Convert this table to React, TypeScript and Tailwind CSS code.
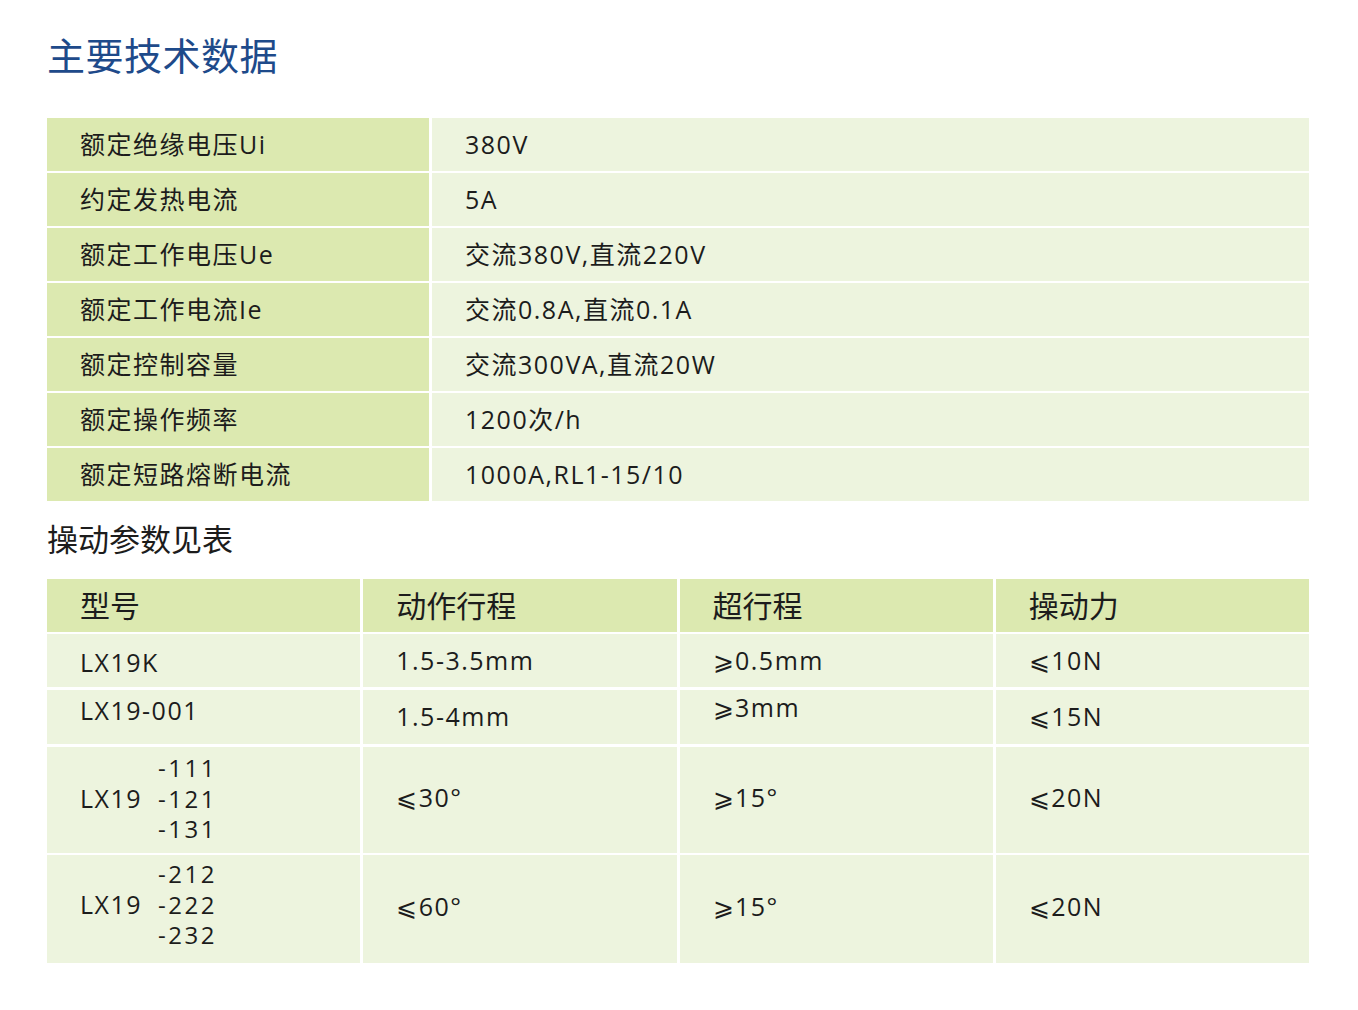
import React from "react";

const specs: [string, string][] = [
  ["额定绝缘电压Ui", "380V"],
  ["约定发热电流", "5A"],
  ["额定工作电压Ue", "交流380V,直流220V"],
  ["额定工作电流Ie", "交流0.8A,直流0.1A"],
  ["额定控制容量", "交流300VA,直流20W"],
  ["额定操作频率", "1200次/h"],
  ["额定短路熔断电流", "1000A,RL1-15/10"],
];

const font = {
  fontFamily: '"Open Sans", "Noto Sans CJK SC", sans-serif',
};

function GroupModel({ codes }: { codes: string[] }) {
  return (
    <div className="flex items-center">
      <span className="w-[78px]">LX19</span>
      <div className="flex flex-col text-[24px] leading-[30.5px] tracking-[2.5px]">
        {codes.map((c) => (
          <span key={c} className="block h-[30.5px]">
            {c}
          </span>
        ))}
      </div>
    </div>
  );
}

export default function App() {
  return (
    <div className="min-h-screen bg-white text-[#1c1c1c] px-[47px] pt-[30px]" style={font}>
      <h1 className="text-[38px] leading-[50px] text-[#1e4a8a] tracking-[0.5px]">
        主要技术数据
      </h1>

      <div className="mt-[38px] grid grid-cols-[382px_1fr] gap-x-[3px] gap-y-[2px] w-[1262px] text-[25px] tracking-[1.5px]">
        {specs.map(([k, v]) => (
          <React.Fragment key={k}>
            <div className="bg-[#dce9b0] h-[53px] flex items-center pl-[33px]">{k}</div>
            <div className="bg-[#edf4de] flex items-center pl-[33px]">{v}</div>
          </React.Fragment>
        ))}
      </div>

      <div className="mt-[14px] text-[31px] leading-[48px]">操动参数见表</div>

      <div className="mt-[16px] grid grid-cols-4 gap-x-[3px] gap-y-[2px] w-[1262px] text-[25px] tracking-[1.5px]">
        {["型号", "动作行程", "超行程", "操动力"].map((h) => (
          <div key={h} className="bg-[#dce9b0] h-[53px] flex items-center pl-[33px] text-[30px] tracking-[0px]">
            {h}
          </div>
        ))}

        <div className="bg-[#edf4de] h-[53px] flex items-center pl-[33px] pt-[4px]">LX19K</div>
        <div className="bg-[#edf4de] h-[53px] flex items-center pl-[33px]">1.5-3.5mm</div>
        <div className="bg-[#edf4de] h-[53px] flex items-center pl-[33px]">⩾0.5mm</div>
        <div className="bg-[#edf4de] h-[53px] flex items-center pl-[33px]">⩽10N</div>

        <div className="bg-[#edf4de] h-[54px] flex items-center pl-[33px] pb-[12px] mt-[1px]">LX19-001</div>
        <div className="bg-[#edf4de] h-[54px] flex items-center pl-[33px] mt-[1px]">1.5-4mm</div>
        <div className="bg-[#edf4de] h-[54px] flex items-center pl-[33px] pb-[18px] mt-[1px]">⩾3mm</div>
        <div className="bg-[#edf4de] h-[54px] flex items-center pl-[33px] mt-[1px]">⩽15N</div>

        <div className="bg-[#edf4de] h-[106px] flex items-center pl-[33px] pb-[2px] mt-[1px]">
          <GroupModel codes={["-111", "-121", "-131"]} />
        </div>
        <div className="bg-[#edf4de] h-[106px] flex items-center pl-[33px] pb-[4px] mt-[1px]">⩽30°</div>
        <div className="bg-[#edf4de] h-[106px] flex items-center pl-[33px] pb-[4px] mt-[1px]">⩾15°</div>
        <div className="bg-[#edf4de] h-[106px] flex items-center pl-[33px] pb-[4px] mt-[1px]">⩽20N</div>

        <div className="bg-[#edf4de] h-[108px] flex items-center pl-[33px] pb-[8px]">
          <GroupModel codes={["-212", "-222", "-232"]} />
        </div>
        <div className="bg-[#edf4de] h-[108px] flex items-center pl-[33px] pb-[4px]">⩽60°</div>
        <div className="bg-[#edf4de] h-[108px] flex items-center pl-[33px] pb-[4px]">⩾15°</div>
        <div className="bg-[#edf4de] h-[108px] flex items-center pl-[33px] pb-[4px]">⩽20N</div>
      </div>
    </div>
  );
}
